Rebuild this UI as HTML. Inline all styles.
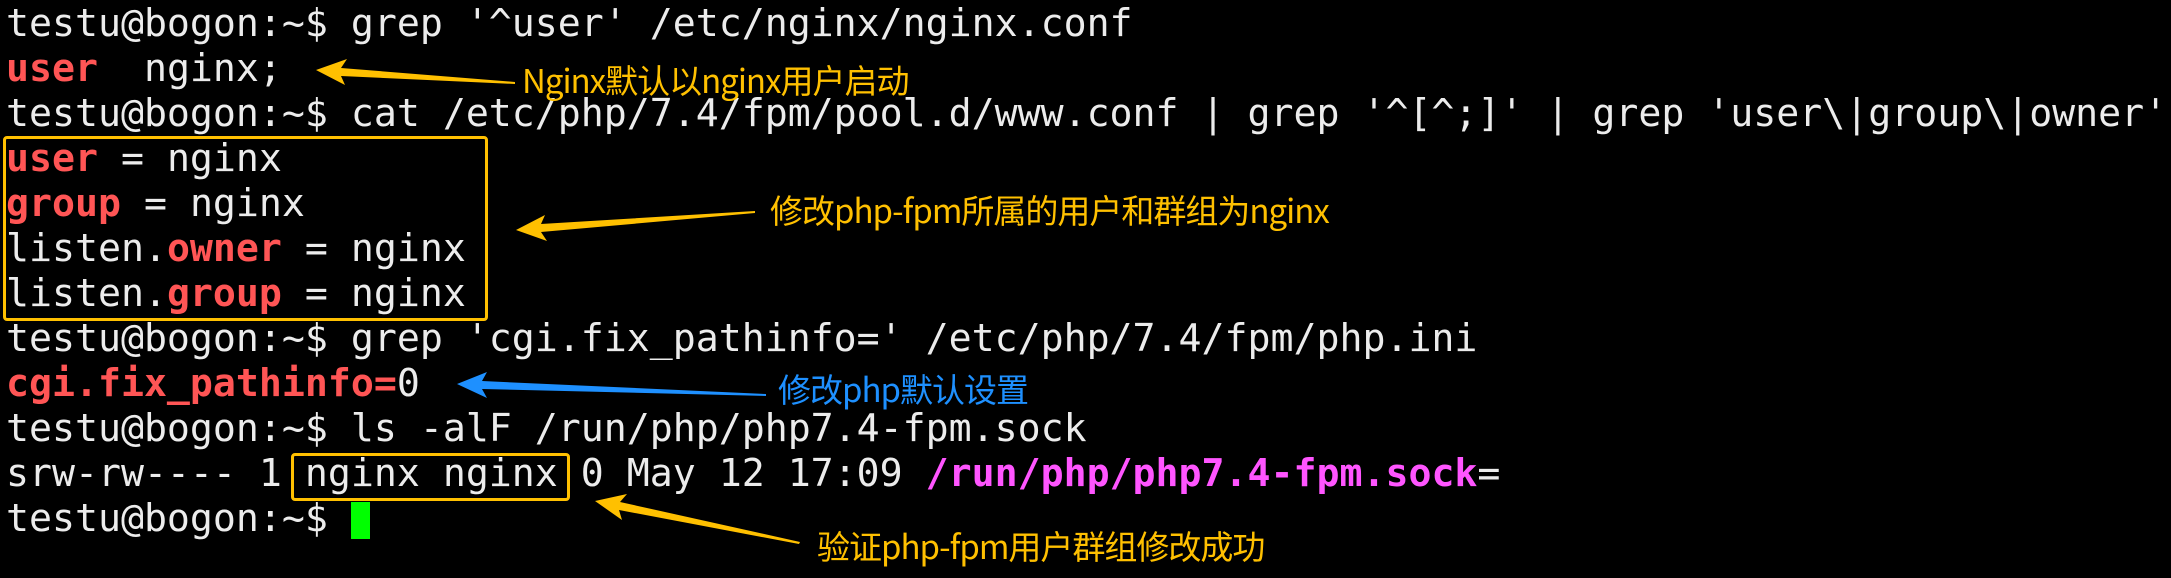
<!DOCTYPE html>
<html><head><meta charset="utf-8"><style>
html,body{margin:0;padding:0;background:#000;width:2171px;height:578px;overflow:hidden;position:relative}
pre{position:absolute;left:6px;top:2px;margin:0;font-family:"DejaVu Sans Mono","Liberation Mono",monospace;font-size:38.2px;line-height:45px;color:#ececec}
.r{color:#ff5555;font-weight:bold}
.m{color:#ff55ff;font-weight:bold}
.cur{display:inline-block;width:19px;height:37px;background:#00ff00;vertical-align:-8px}
.box{position:absolute;border:3px solid #ffc000;border-radius:4px;box-sizing:border-box}
.a{position:absolute;font-family:"Noto Sans CJK SC","WenQuanYi Zen Hei",sans-serif;font-size:33px;line-height:40px;color:#ffc000;white-space:nowrap;letter-spacing:-1px}
svg{position:absolute;left:0;top:0}
</style></head><body>
<pre>testu@bogon:~$ grep '^user' /etc/nginx/nginx.conf
<span class="r">user</span>  nginx;
testu@bogon:~$ cat /etc/php/7.4/fpm/pool.d/www.conf | grep '^[^;]' | grep 'user\|group\|owner'
<span class="r">user</span> = nginx
<span class="r">group</span> = nginx
listen.<span class="r">owner</span> = nginx
listen.<span class="r">group</span> = nginx
testu@bogon:~$ grep 'cgi.fix_pathinfo=' /etc/php/7.4/fpm/php.ini
<span class="r">cgi.fix_pathinfo=</span>0
testu@bogon:~$ ls -alF /run/php/php7.4-fpm.sock
srw-rw---- 1 nginx nginx 0 May 12 17:09 <span class="m">/run/php/php7.4-fpm.sock</span>=
testu@bogon:~$ <span class="cur"></span></pre>
<div class="box" style="left:3px;top:136px;width:485px;height:185px"></div>
<div class="box" style="left:291px;top:453px;width:279px;height:48px"></div>
<svg width="2171" height="578">
<polygon fill="#ffc000" points="316,70 347,59 341,68 515,82 515,84 341,76 345,85"/>
<polygon fill="#ffc000" points="516,230 545,215 541,224 755,211 755,213 541,232 547,241"/>
<polygon fill="#1e90ff" points="457,384 487,372 482,381 766,394 766,396 482,389 487,398"/>
<polygon fill="#ffc000" points="595,501 627,494 620,502 800,542 799,544 619,510 622,520"/>
</svg>
<div class="a" style="left:522px;top:59px">Nginx默认以nginx用户启动</div>
<div class="a" style="left:770px;top:189px">修改php-fpm所属的用户和群组为nginx</div>
<div class="a" style="left:778px;top:368px;color:#1e90ff">修改php默认设置</div>
<div class="a" style="left:817px;top:525px">验证php-fpm用户群组修改成功</div>
</body></html>
